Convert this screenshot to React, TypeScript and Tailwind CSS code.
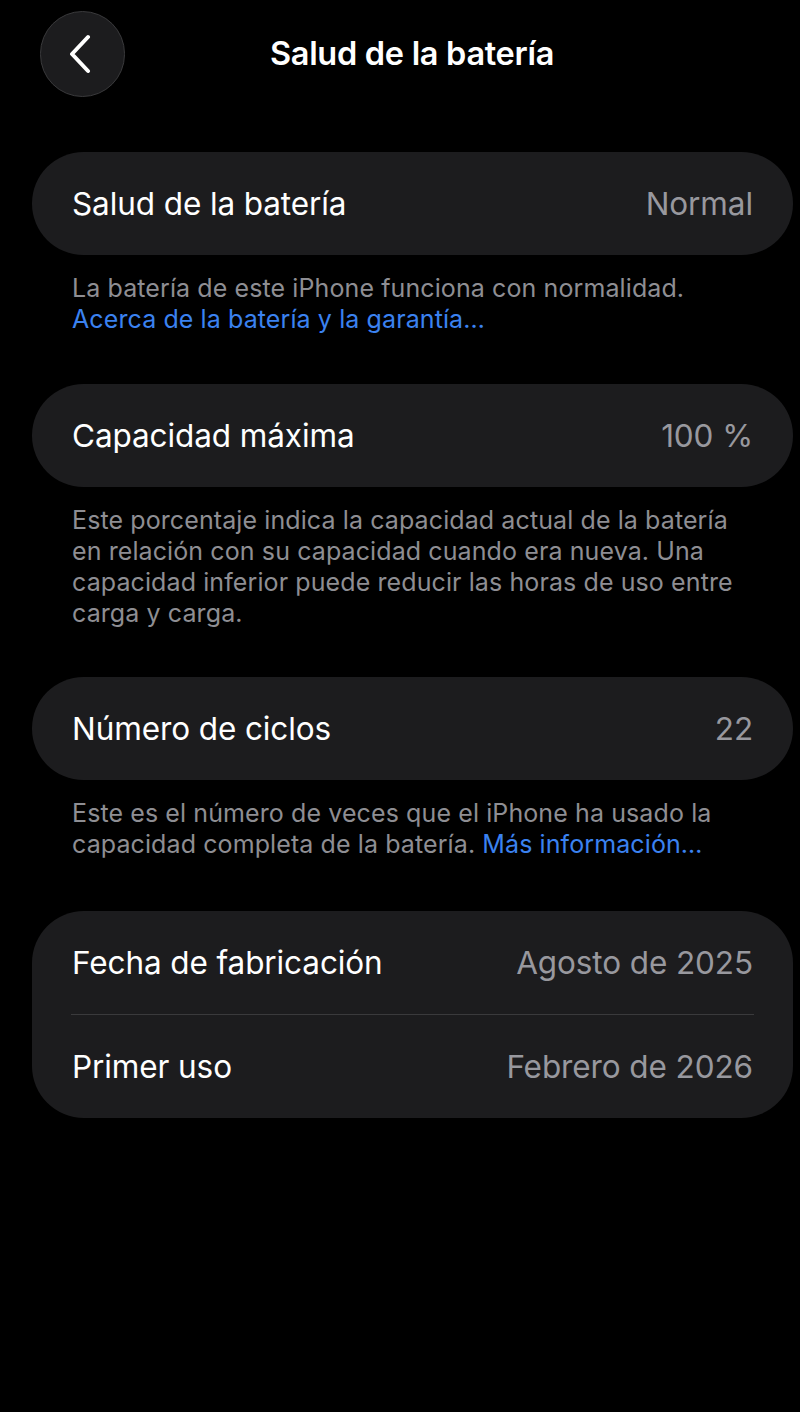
import React from 'react';

const font = { fontFamily: 'Inter, "Noto Sans", sans-serif' };

function Row({ label, value }: { label: string; value: string }) {
  return (
    <div className="h-[103px] flex items-center justify-between px-[40px]">
      <span className="text-[31.5px] text-white tracking-[-0.1px]">{label}</span>
      <span className="text-[31.5px] text-[#98989e] tracking-[-0.1px]">{value}</span>
    </div>
  );
}

function Card({ children }: { children: React.ReactNode }) {
  return <div className="ml-[32px] w-[761px] rounded-[52px] bg-[#1c1c1e]">{children}</div>;
}

function Note({ children }: { children: React.ReactNode }) {
  return (
    <p className="mt-[18px] pl-[72px] pr-[16px] text-[25px] leading-[31px] text-[#8e8e93] tracking-[0.1px]">
      {children}
    </p>
  );
}

export default function App() {
  return (
    <div className="min-h-[1412px] w-[800px] bg-black pb-10" style={font}>
      {/* header */}
      <div className="flex items-center pt-[11px]">
        <button className="ml-[40px] w-[85px] h-[86px] rounded-full bg-[#1c1c1e] border border-[#3a3a3c] flex items-center justify-center">
          <svg width="26" height="40" viewBox="0 0 26 40" fill="none">
            <path d="M18 3 L2 20 L18 37" stroke="white" strokeWidth="4" strokeLinecap="round" strokeLinejoin="round" />
          </svg>
        </button>
        <h1 className="flex-1 text-center text-[32.5px] font-semibold text-white tracking-[-0.3px]">Salud de la batería</h1>
        <div className="w-[101px]" />
      </div>

      <div className="mt-[55px]">
        <Card>
          <Row label="Salud de la batería" value="Normal" />
        </Card>
        <Note>
          La batería de este iPhone funciona con normalidad.
          <br />
          <span className="text-[#3b82f0]">Acerca de la batería y la garantía…</span>
        </Note>
      </div>

      <div className="mt-[49px]">
        <Card>
          <Row label="Capacidad máxima" value="100 %" />
        </Card>
        <Note>
          Este porcentaje indica la capacidad actual de la batería
          <br />
          en relación con su capacidad cuando era nueva. Una
          <br />
          capacidad inferior puede reducir las horas de uso entre
          <br />
          carga y carga.
        </Note>
      </div>

      <div className="mt-[48px]">
        <Card>
          <Row label="Número de ciclos" value="22" />
        </Card>
        <Note>
          Este es el número de veces que el iPhone ha usado la
          <br />
          capacidad completa de la batería.{' '}
          <span className="text-[#3b82f0]">Más información…</span>
        </Note>
      </div>

      <div className="mt-[51px]">
        <Card>
          <Row label="Fecha de fabricación" value="Agosto de 2025" />
          <div className="mx-[39px] h-px bg-[#3a3a3c]" />
          <Row label="Primer uso" value="Febrero de 2026" />
        </Card>
      </div>
    </div>
  );
}
